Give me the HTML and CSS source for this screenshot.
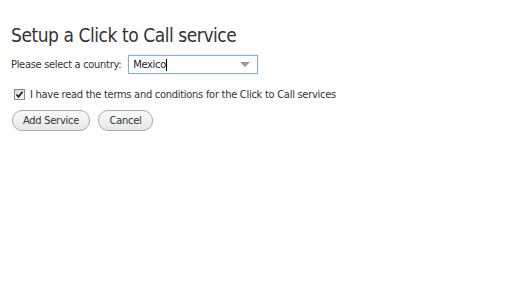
FILE: index.html
```html
<!DOCTYPE html>
<html>
<head>
<meta charset="utf-8">
<link rel="stylesheet" href="styles.css">
</head>
<body>
<div class="page">
  <h1 class="title">Setup a Click to Call service</h1>
  <div class="country-row">
    <span class="label">Please select a country:</span>
    <div class="select">
      <span class="select-value">Mexico<span class="caret"></span></span>
      <span class="arrow"></span>
    </div>
  </div>
  <label class="terms">
    <span class="checkbox"><svg width="9" height="9" viewBox="0 0 9 9"><path d="M1.5 4.5 L3.5 6.8 L7.5 1.8" fill="none" stroke="#222" stroke-width="1.8"/></svg></span>
    <span class="terms-text">I have read the terms and conditions for the Click to Call services</span>
  </label>
  <div class="buttons">
    <span class="btn btn-add">Add Service</span>
    <span class="btn btn-cancel">Cancel</span>
  </div>
</div>
</body>
</html>
```
FILE: styles.css
```css
html, body {
  margin: 0;
  padding: 0;
  background: #fff;
}
body {
  font-family: "DejaVu Sans Condensed", "DejaVu Sans", sans-serif;
  color: #333;
}
.page {
  padding: 22px 0 0 11px;
}
.title {
  margin: 0;
  font-weight: normal;
  font-size: 19px;
  line-height: 26px;
  color: #333;
  letter-spacing: -0.45px;
}
.country-row {
  display: flex;
  align-items: center;
  margin-top: 7px;
  font-size: 11px;
  letter-spacing: -0.3px;
}
.label {
  color: #333;
  margin-right: 7px;
}
.select {
  height: 17px;
  border: 1px solid #88ade0;
  box-shadow: 0 0 1px #a8c6ee;
  display: flex;
  align-items: center;
  justify-content: space-between;
  padding: 0 0 0 4px;
  box-sizing: content-box;
  width: 124px;
}
.select-value {
  color: #222;
  display: flex;
  align-items: center;
}
.caret {
  display: inline-block;
  width: 1px;
  height: 12px;
  background: #000;
}
.arrow {
  width: 0;
  height: 0;
  border-left: 5px solid transparent;
  border-right: 5px solid transparent;
  border-top: 5px solid #999;
  margin-right: 7px;
}
.terms {
  display: flex;
  align-items: center;
  margin-top: 14px;
  margin-left: 3px;
  font-size: 11px;
  letter-spacing: -0.27px;
}
.checkbox {
  width: 9px;
  height: 9px;
  border: 1px solid #888;
  background: linear-gradient(#ddd, #fafafa);
  display: inline-flex;
  margin-right: 5px;
}
.buttons {
  display: flex;
  gap: 8px;
  margin-top: 9px;
  margin-left: 1px;
}
.btn {
  display: inline-flex;
  align-items: center;
  justify-content: center;
  height: 19px;
  border: 1px solid #aaa;
  border-radius: 10px;
  background: linear-gradient(#fafafa, #e6e6e6);
  font-size: 11px;
  letter-spacing: -0.25px;
  color: #333;
}
.btn-add {
  width: 76px;
}
.btn-cancel {
  width: 53px;
}
```
